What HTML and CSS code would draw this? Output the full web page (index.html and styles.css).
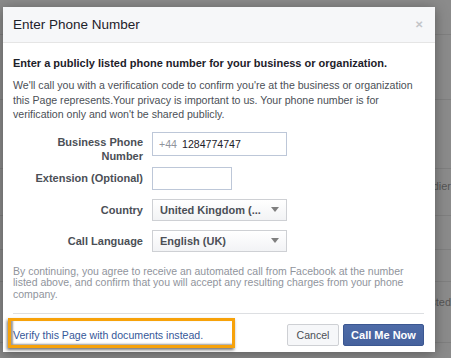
FILE: index.html
```html
<!DOCTYPE html>
<html>
<head>
    <title>Enter Phone Number</title>
    <meta name="viewport" content="width=device-width, initial-scale=1">
    <link rel="stylesheet" href="styles.css">
</head>
<body>
    <div class="page">
        <div class="page-row r1"></div>
        <div class="page-row r2"></div>
        <div class="page-row r3"></div>
        <div class="page-row r4"><span class="page-text">dier</span></div>
        <div class="page-row r5"></div>
        <div class="page-row r6"></div>
        <div class="page-row r7"><span class="page-text">sted</span></div>
    </div>

    <div class="dialog">
        <div class="dialog-header">
            <div class="dialog-title">Enter Phone Number</div>
            <div class="dialog-close">&#x2715;</div>
        </div>
        <div class="dialog-body">
            <p class="lead">Enter a publicly listed phone number for your business or organization.</p>
            <p class="info">We'll call you with a verification code to confirm you're at the business or organization this Page represents.Your privacy is important to us. Your phone number is for verification only and won't be shared publicly.</p>

            <div class="form">
                <div class="form-row">
                    <label class="form-label two-line">Business Phone Number</label>
                    <div class="input input-phone"><span class="prefix">+44</span>1284774747</div>
                </div>
                <div class="form-row">
                    <label class="form-label">Extension (Optional)</label>
                    <div class="input input-ext"></div>
                </div>
                <div class="form-row">
                    <label class="form-label">Country</label>
                    <div class="select"><span>United Kingdom (...</span><span class="arrow"></span></div>
                </div>
                <div class="form-row">
                    <label class="form-label">Call Language</label>
                    <div class="select"><span>English (UK)</span><span class="arrow"></span></div>
                </div>
            </div>

            <p class="terms">By continuing, you agree to receive an automated call from Facebook at the number listed above, and confirm that you will accept any resulting charges from your phone company.</p>
        </div>
        <div class="dialog-footer">
            <a class="doc-link" href="#">Verify this Page with documents instead.</a>
            <div class="buttons">
                <button class="btn btn-cancel">Cancel</button>
                <button class="btn btn-primary">Call Me Now</button>
            </div>
        </div>
        <div class="highlight"></div>
    </div>
</body>
</html>
```

FILE: styles.css
```css
body {
    margin: 0;
    background-color: #8b8b8b;
    font-family: "Liberation Sans", Arial, sans-serif;
    font-size: 10.6px;
    overflow: hidden;
}
.page-row {
    border-bottom: 1px solid #7f7f7f;
    position: relative;
}
.r1 { height: 34px; }
.r2 { height: 64px; }
.r3 { height: 68px; }
.r4 { height: 46px; }
.r5 { height: 33px; }
.r6 { height: 31px; }
.r7 { height: 60px; }
.page-text {
    position: absolute;
    right: 0;
    color: #555;
    font-size: 11px;
}
.r4 .page-text {
    top: 11px;
}
.r7 .page-text {
    top: 14px;
}
.dialog {
    position: absolute;
    left: 3px;
    top: 7px;
    width: 432px;
    height: 345px;
    background-color: #fff;
    box-shadow: 0 2px 12px rgba(0,0,0,0.35);
}
.dialog-header {
    height: 35px;
    background-color: #f6f7f9;
    border-bottom: 1px solid #e5e5e5;
    display: flex;
    align-items: center;
    justify-content: space-between;
    padding: 0 12px 0 10px;
}
.dialog-title {
    font-size: 13.5px;
    color: #1d2129;
}
.dialog-close {
    color: #c3c5c9;
    font-size: 10px;
    font-weight: bold;
}
.dialog-body {
    padding: 13px 11px 0 10px;
}
p {
    margin: 0;
}
.lead {
    font-size: 11px;
    font-weight: bold;
    color: #1d2129;
    line-height: 14px;
}
.info {
    margin-top: 8px;
    color: #4b4f56;
    line-height: 14.5px;
}
.form {
    margin-top: 10px;
    display: flex;
    flex-direction: column;
    gap: 9px;
}
.form-row {
    display: flex;
    align-items: flex-start;
    gap: 9px;
}
.form-label {
    width: 130px;
    text-align: right;
    color: #4b4f56;
    font-size: 11px;
    font-weight: bold;
    line-height: 14px;
    padding-top: 4px;
}
.form-label.two-line {
    padding-top: 3px;
    margin-bottom: -5px;
}
.input {
    height: 22px;
    line-height: 22px;
    border: 1px solid #bdc7d8;
    padding: 0 6px;
    color: #1d2129;
}
.input-phone {
    width: 121px;
}
.input-ext {
    width: 66px;
    height: 21px;
}
.prefix {
    color: #90949c;
    margin-right: 5px;
}
.select {
    width: 119px;
    height: 20px;
    border: 1px solid #ced0d4;
    background: linear-gradient(#fff, #f2f3f5);
    padding: 0 7px;
    display: flex;
    justify-content: space-between;
    align-items: center;
    color: #4b4f56;
    font-size: 11px;
    font-weight: bold;
}
.arrow {
    width: 0;
    height: 0;
    border-left: 4px solid transparent;
    border-right: 4px solid transparent;
    border-top: 5px solid #7f7f7f;
}
.terms {
    margin-top: 14px;
    color: #90949c;
    font-size: 10.5px;
    line-height: 11.7px;
    padding-bottom: 12px;
    border-bottom: 1px solid #dddfe2;
}
.dialog-footer {
    display: flex;
    justify-content: space-between;
    align-items: center;
    padding: 10px 11px 0 10px;
}
.doc-link {
    color: #365899;
    text-decoration: none;
}
.buttons {
    display: flex;
    gap: 4px;
}
.btn {
    font-family: "Liberation Sans", Arial, sans-serif;
    font-size: 10.6px;
    height: 22px;
    padding: 0;
    border: 1px solid #ced0d4;
    background-color: #f6f7f9;
    color: #4b4f56;
    border-radius: 2px;
}
.btn-cancel {
    width: 52px;
}
.btn-primary {
    width: 81px;
    font-size: 11px;
    background: linear-gradient(#4e6ba7, #45619d);
    border-color: #3b5791;
    color: #fff;
    font-weight: bold;
}
.highlight {
    position: absolute;
    left: 5px;
    top: 311px;
    width: 221px;
    height: 24px;
    border: 3px solid #f7a20a;
    box-shadow: -1px 2px 3px rgba(0,0,0,0.55), inset 2px -1px 2px rgba(0,0,0,0.4);
}
```
